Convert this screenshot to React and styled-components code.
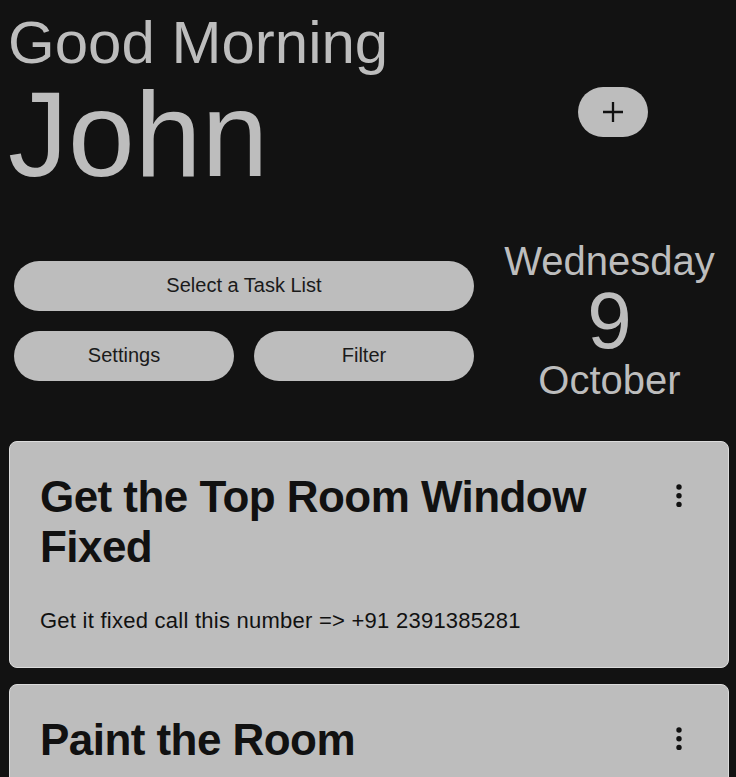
import React from "react";
import styled, { createGlobalStyle } from "styled-components";

const Global = createGlobalStyle`
  html, body { margin: 0; padding: 0; background: #121212; }
  body { font-family: "Liberation Sans", Arial, sans-serif; color: #bdbdbd; }
  * { box-sizing: border-box; }
`;

const Page = styled.div`
  width: 736px;
  display: flex;
  flex-direction: column;
`;

const Header = styled.header`
  display: grid;
  grid-template-columns: 1fr 246px;
  padding-top: 8px;
`;

const Greeting = styled.div`
  padding-left: 8px;
`;

const Hello = styled.div`
  font-size: 60px;
  line-height: 70px;
`;

const Name = styled.div`
  font-size: 120px;
  line-height: 113px;
`;

const AddSlot = styled.div`
  display: flex;
  justify-content: center;
  padding-top: 79px;
`;

const AddButton = styled.button`
  width: 70px;
  height: 50px;
  border: none;
  border-radius: 25px;
  background: #bdbdbd;
  display: flex;
  align-items: center;
  justify-content: center;
  padding: 0;
  cursor: pointer;
`;

const Controls = styled.section`
  display: grid;
  grid-template-columns: 460px 1fr;
  column-gap: 9px;
  align-items: center;
  padding-left: 14px;
  margin-top: 47px;
`;

const ButtonGrid = styled.div`
  display: grid;
  grid-template-columns: 1fr 1fr;
  gap: 20px;
`;

const Pill = styled.button`
  grid-column: ${(p) => (p.$wide ? "1 / span 2" : "auto")};
  height: 50px;
  border: none;
  border-radius: 25px;
  background: #bdbdbd;
  color: #1a1a1a;
  font-family: "Liberation Sans", Arial, sans-serif;
  font-size: 20px;
  cursor: pointer;
`;

const DateBox = styled.div`
  display: flex;
  flex-direction: column;
  align-items: center;
`;

const DateLine = styled.div`
  font-size: ${(p) => p.$size}px;
  line-height: ${(p) => p.$lh}px;
`;

const Cards = styled.div`
  display: flex;
  flex-direction: column;
  gap: 16px;
  margin-top: 38px;
  padding-left: 9px;
`;

const Card = styled.article`
  width: 720px;
  background: #bdbdbd;
  border: 1px solid #dcdcdc;
  border-radius: 8px;
  padding: 30px 37px 34px 30px;
  display: flex;
  gap: 16px;
  color: #111;
`;

const CardBody = styled.div`
  flex: 1;
  min-width: 0;
`;

const Title = styled.h2`
  margin: 0;
  font-size: 44px;
  line-height: 50px;
  font-weight: 700;
  letter-spacing: -0.55px;
`;

const Desc = styled.p`
  margin: 36px 0 0;
  font-size: 22px;
  line-height: 25px;
  letter-spacing: 0.25px;
`;

const MenuButton = styled.button`
  width: 24px;
  height: 28px;
  margin-top: 10px;
  padding: 0;
  border: none;
  background: transparent;
  flex: none;
  cursor: pointer;
`;

const Plus = () => (
  <svg width="22" height="22" viewBox="0 0 22 22">
    <path d="M11 1v20M1 11h20" stroke="#111" strokeWidth="2.3" fill="none" />
  </svg>
);

const Kebab = () => (
  <svg width="24" height="28" viewBox="0 0 24 28">
    <circle cx="12" cy="5" r="2.7" fill="#111" />
    <circle cx="12" cy="13.7" r="2.7" fill="#111" />
    <circle cx="12" cy="22.4" r="2.7" fill="#111" />
  </svg>
);

const tasks = [
  { title: "Get the Top Room Window Fixed", desc: "Get it fixed call this number => +91 2391385281" },
  { title: "Paint the Room", desc: "Buy the paint from the hardware store" },
];

export default function App() {
  return (
    <Page>
      <Global />
      <Header>
        <Greeting>
          <Hello>Good Morning</Hello>
          <Name>John</Name>
        </Greeting>
        <AddSlot>
          <AddButton aria-label="Add task">
            <Plus />
          </AddButton>
        </AddSlot>
      </Header>
      <Controls>
        <ButtonGrid>
          <Pill $wide>Select a Task List</Pill>
          <Pill>Settings</Pill>
          <Pill>Filter</Pill>
        </ButtonGrid>
        <DateBox>
          <DateLine $size={40} $lh={46}>Wednesday</DateLine>
          <DateLine $size={80} $lh={73}>9</DateLine>
          <DateLine $size={40} $lh={46}>October</DateLine>
        </DateBox>
      </Controls>
      <Cards>
        {tasks.map((t) => (
          <Card key={t.title}>
            <CardBody>
              <Title>{t.title}</Title>
              <Desc>{t.desc}</Desc>
            </CardBody>
            <MenuButton aria-label="More">
              <Kebab />
            </MenuButton>
          </Card>
        ))}
      </Cards>
    </Page>
  );
}
